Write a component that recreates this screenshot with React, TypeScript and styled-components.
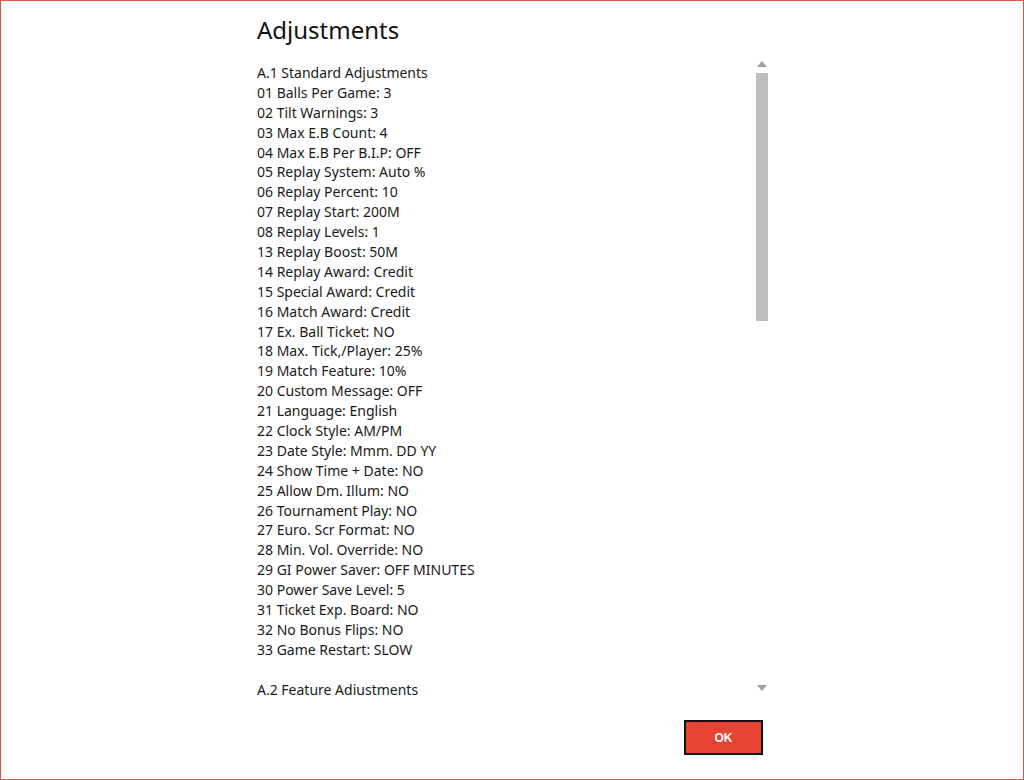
import styled, { createGlobalStyle } from 'styled-components';

const GlobalStyle = createGlobalStyle`
  html, body {
    margin: 0;
    padding: 0;
    background: #fff;
  }
  body {
    font-family: 'Noto Sans', 'Open Sans', sans-serif;
    color: #1a1a1a;
  }
`;

const Window = styled.div`
  box-sizing: border-box;
  width: 1024px;
  height: 780px;
  border: 1px solid #d9534f;
  background: #fff;
  display: flex;
  justify-content: flex-start;
  padding-left: 256px;
`;

const Column = styled.div`
  width: 511px;
  display: flex;
  flex-direction: column;
`;

const Title = styled.h1`
  margin: 0;
  padding-top: 14px;
  height: 58px;
  box-sizing: border-box;
  font-size: 24px;
  font-weight: 400;
  line-height: 30px;
  color: #111;
`;

const ScrollArea = styled.div`
  display: flex;
  height: 642px;
`;

const List = styled.div`
  flex: 1;
  overflow: hidden;
  padding-top: 4px;
`;

const Line = styled.div<{ $gapBefore?: boolean }>`
  font-size: 14px;
  line-height: 19.9px;
  height: 19.9px;
  white-space: nowrap;
  margin-top: ${(p) => (p.$gapBefore ? '20px' : '0')};
`;

const ScrollBar = styled.div`
  width: 12px;
  height: 636px;
  display: flex;
  flex-direction: column;
  align-items: center;
`;

const Arrow = styled.div<{ $down?: boolean }>`
  width: 0;
  height: 0;
  border-left: 5px solid transparent;
  border-right: 5px solid transparent;
  ${(p) => (p.$down ? 'border-top: 6px solid #a0a0a0;' : 'border-bottom: 6px solid #a0a0a0;')}
  margin: ${(p) => (p.$down ? '0 0 4px' : '2px 0 6px')};
`;

const Track = styled.div`
  flex: 1;
  width: 12px;
  margin-bottom: 4px;
`;

const Thumb = styled.div`
  width: 12px;
  height: 248px;
  background: #bdbdbd;
`;

const Footer = styled.div`
  display: flex;
  justify-content: flex-end;
  padding-top: 19px;
  padding-right: 5px;
`;

const OkButton = styled.button`
  box-sizing: border-box;
  width: 79px;
  height: 35px;
  border: 2px solid #111;
  background: #e84233;
  color: #fff;
  font-family: 'Liberation Sans', Arial, sans-serif;
  font-weight: 700;
  font-size: 12px;
  cursor: pointer;
`;

const standard = [
  '01 Balls Per Game: 3',
  '02 Tilt Warnings: 3',
  '03 Max E.B Count: 4',
  '04 Max E.B Per B.I.P: OFF',
  '05 Replay System: Auto %',
  '06 Replay Percent: 10',
  '07 Replay Start: 200M',
  '08 Replay Levels: 1',
  '13 Replay Boost: 50M',
  '14 Replay Award: Credit',
  '15 Special Award: Credit',
  '16 Match Award: Credit',
  '17 Ex. Ball Ticket: NO',
  '18 Max. Tick,/Player: 25%',
  '19 Match Feature: 10%',
  '20 Custom Message: OFF',
  '21 Language: English',
  '22 Clock Style: AM/PM',
  '23 Date Style: Mmm. DD YY',
  '24 Show Time + Date: NO',
  '25 Allow Dm. Illum: NO',
  '26 Tournament Play: NO',
  '27 Euro. Scr Format: NO',
  '28 Min. Vol. Override: NO',
  '29 GI Power Saver: OFF MINUTES',
  '30 Power Save Level: 5',
  '31 Ticket Exp. Board: NO',
  '32 No Bonus Flips: NO',
  '33 Game Restart: SLOW',
];

export default function App() {
  return (
    <>
      <GlobalStyle />
      <Window>
        <Column>
          <Title>Adjustments</Title>
          <ScrollArea>
            <List>
              <Line>A.1 Standard Adjustments</Line>
              {standard.map((s) => (
                <Line key={s}>{s}</Line>
              ))}
              <Line $gapBefore>A.2 Feature Adiustments</Line>
            </List>
            <ScrollBar>
              <Arrow />
              <Track>
                <Thumb />
              </Track>
              <Arrow $down />
            </ScrollBar>
          </ScrollArea>
          <Footer>
            <OkButton>OK</OkButton>
          </Footer>
        </Column>
      </Window>
    </>
  );
}
